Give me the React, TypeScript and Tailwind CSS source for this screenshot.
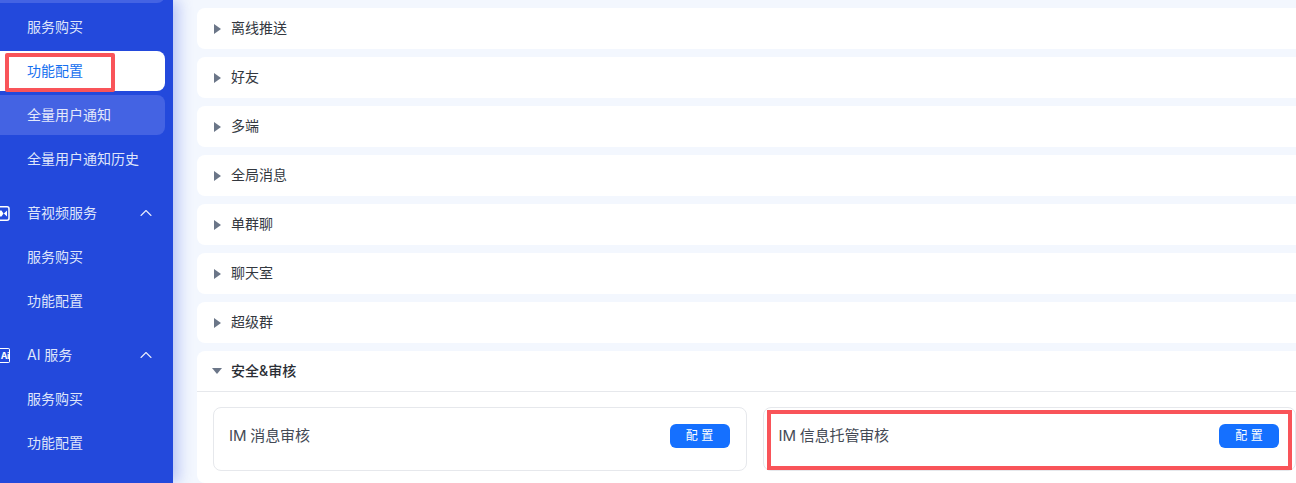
import { ChevronUp } from 'lucide-react';

const collapsed = ['离线推送', '好友', '多端', '全局消息', '单群聊', '聊天室', '超级群'];

function SubItem({ label, state }: { label: string; state?: 'active' | 'hover' }) {
  const look =
    state === 'active'
      ? 'bg-white text-[#1570ef]'
      : state === 'hover'
        ? 'bg-[#4463e3] text-[#e4e9fb]'
        : 'text-[#dfe5fa]';
  return <div className={`mr-2 flex h-10 items-center rounded-r-lg pb-[1px] pl-[27px] text-sm ${look}`}>{label}</div>;
}

function GroupHead({ label, icon }: { label: string; icon: React.ReactNode }) {
  return (
    <div className="flex h-10 items-center pr-[17px] text-sm text-[#dfe5fa]">
      <span className="flex w-[27px] shrink-0">{icon}</span>
      <span className="flex-1 pb-[1px]">{label}</span>
      <ChevronUp size={20} strokeWidth={1.3} className="text-[#e8ecfc]" />
    </div>
  );
}

function ServiceCard({ title, highlight }: { title: string; highlight?: boolean }) {
  return (
    <div className="relative flex h-16 flex-1 items-start justify-between rounded-lg border border-[#e6e8ec] bg-white px-4 pt-[16px]">
      <span className="-ml-[1px] mt-[1px] text-[15px] tracking-[-0.15px] text-[#444a55]">{title}</span>
      <button className="h-6 w-[60px] rounded-md bg-[#1570ff] text-xs text-white">配 置</button>
      {highlight && <div className="absolute bottom-0 left-[3px] right-[3px] top-[2px] border-4 border-[#f95459]" />}
    </div>
  );
}

export default function App() {
  return (
    <div
      className="flex h-[483px] w-[1296px] overflow-hidden bg-[#f3f7fe]"
      style={{ fontFamily: 'Inter, "Noto Sans CJK SC", sans-serif' }}
    >
      <aside className="relative z-10 w-[173px] shrink-0 overflow-hidden bg-[#2349dc] shadow-[5px_0_14px_rgba(35,73,220,0.3)]">
        <div className="-mt-[37px] flex flex-col gap-1">
          <div className="mr-2 h-10 rounded-r-lg bg-[#4463e3]" />
          <SubItem label="服务购买" />
          <SubItem label="功能配置" state="active" />
          <SubItem label="全量用户通知" state="hover" />
          <SubItem label="全量用户通知历史" />
          <div className="h-[6px]" />
          <GroupHead
            label="音视频服务"
            icon={
              <svg width="10" height="15" viewBox="0 0 10 15" fill="none">
                <rect x="-5" y="0.8" width="14" height="13.4" rx="2" stroke="white" strokeWidth="1.5" />
                <path d="M0 4.5h1.5L3.5 7.5 1.5 10.5H0zM7 4.5v6L3.8 7.5z" fill="white" />
              </svg>
            }
          />
          <SubItem label="服务购买" />
          <SubItem label="功能配置" />
          <div className="h-[6px]" />
          <GroupHead
            label="AI 服务"
            icon={
              <span className="flex h-[15px] w-[10px] items-center justify-end rounded-r-[2px] border-y-[1.5px] border-r-[1.5px] border-white text-[9px] font-bold leading-none tracking-[-0.5px] text-white">
                Ai
              </span>
            }
          />
          <SubItem label="服务购买" />
          <SubItem label="功能配置" />
        </div>
      </aside>

      <main className="flex min-w-0 flex-1 flex-col gap-2 pl-6 pt-2">
        {collapsed.map((name) => (
          <div key={name} className="flex h-[41px] shrink-0 items-center rounded-l-lg bg-white pl-[17px] text-sm text-[#33383f]">
            <span className="mr-[10px] h-0 w-0 border-y-[5px] border-l-[7px] border-y-transparent border-l-[#6b7688]" />
            <span className="pb-[2px]">{name}</span>
          </div>
        ))}
        <section className="shrink-0 rounded-l-lg bg-white">
          <div className="flex h-[41px] items-center border-b border-[#e6e8ec] pl-[15px] text-sm font-medium text-[#2a2e35]">
            <span className="mr-[9px] h-0 w-0 border-x-[5px] border-t-[6px] border-x-transparent border-t-[#6b7688]" />
            安全&amp;审核
          </div>
          <div className="flex gap-4 pb-3 pl-4 pt-[15px]">
            <ServiceCard title="IM 消息审核" />
            <ServiceCard title="IM 信息托管审核" highlight />
          </div>
        </section>
      </main>

      <div className="pointer-events-none absolute left-[5px] top-[53px] z-20 h-[39px] w-[110px] rounded-[2px] border-4 border-[#f95459]" />
    </div>
  );
}
